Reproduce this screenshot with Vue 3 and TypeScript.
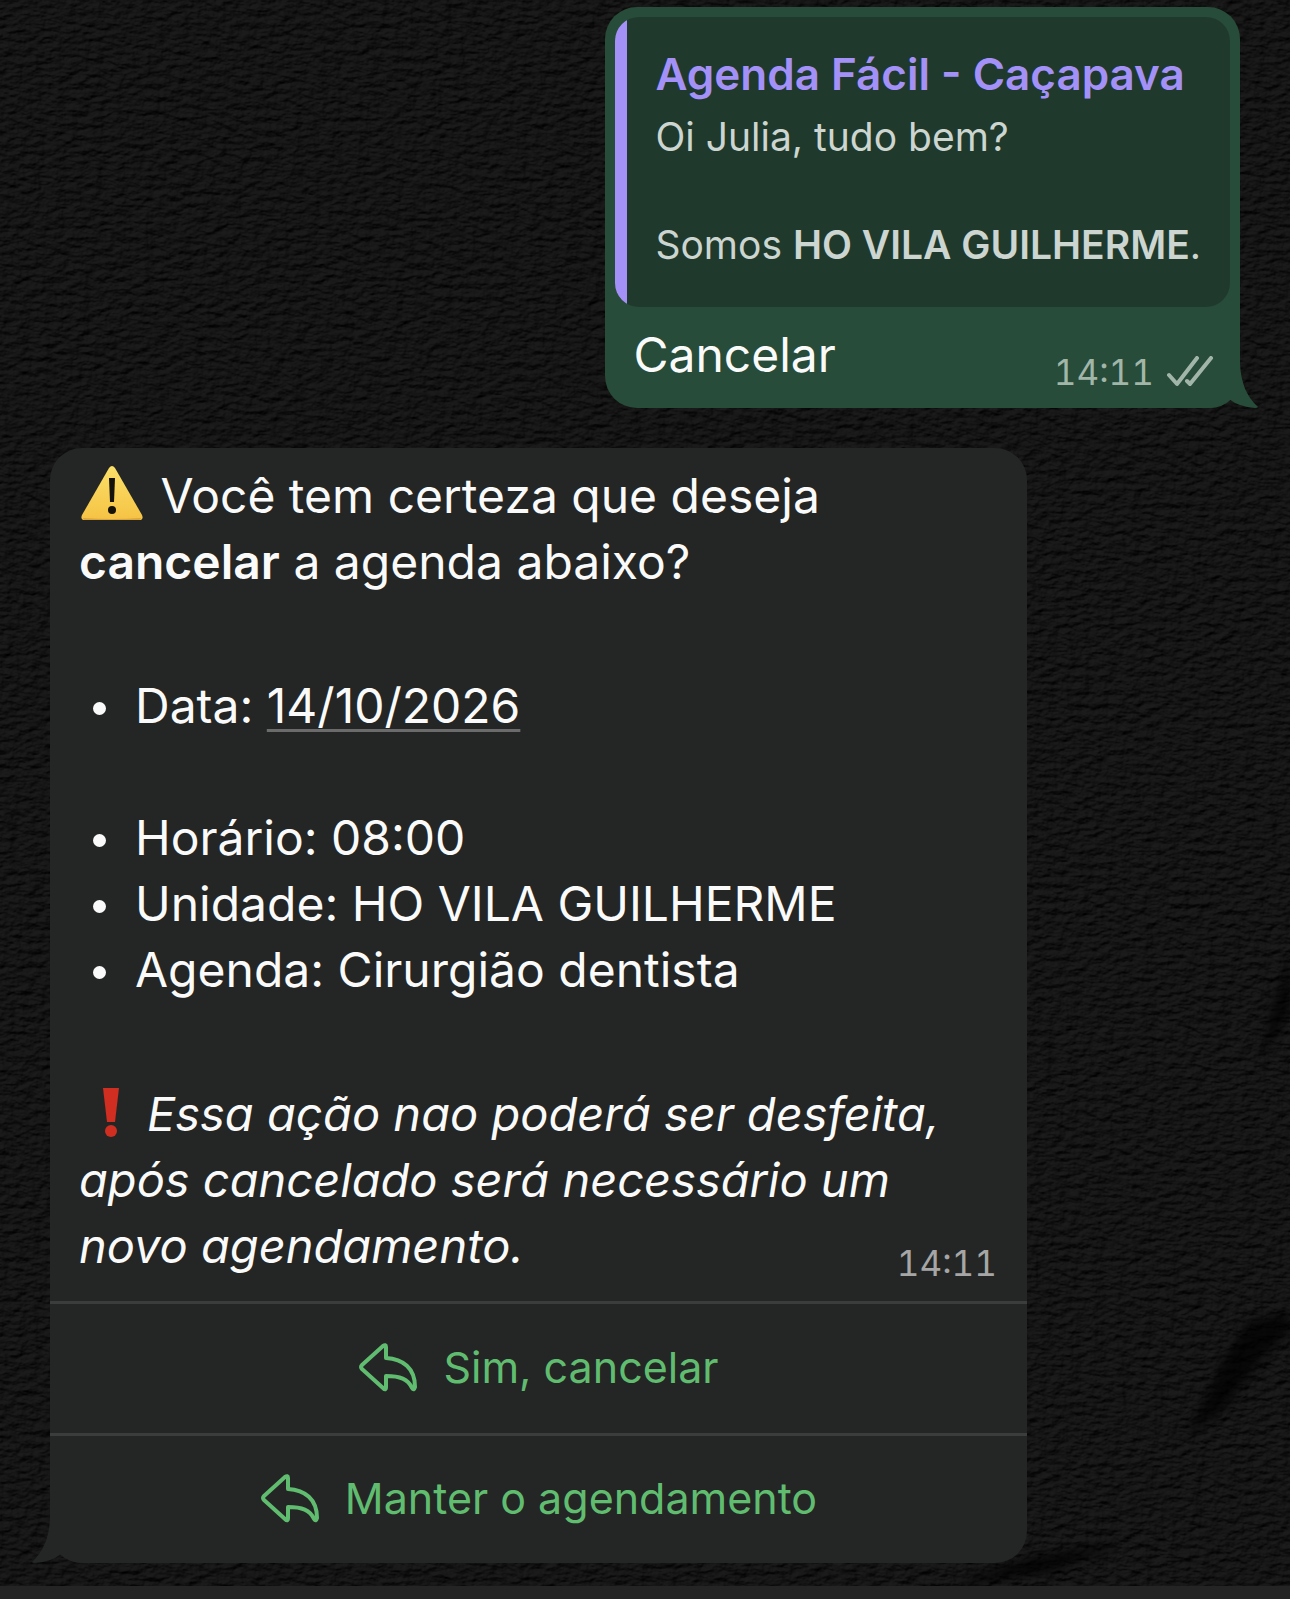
<script setup lang="ts">
interface Detail {
  label: string
  value: string
  isDate?: boolean
}

const details: Detail[] = [
  { label: 'Data', value: '14/10/2026', isDate: true },
  { label: 'Horário', value: '08:00' },
  { label: 'Unidade', value: 'HO VILA GUILHERME' },
  { label: 'Agenda', value: 'Cirurgião dentista' },
]

const replies: string[] = ['Sim, cancelar', 'Manter o agendamento']
</script>

<template>
  <div class="screen">
    <svg class="wallpaper" aria-hidden="true">
      <defs>
        <filter id="rock" x="0" y="0" width="100%" height="100%" color-interpolation-filters="sRGB">
          <feTurbulence type="fractalNoise" baseFrequency="0.08 0.15" numOctaves="5" seed="23" />
          <feDiffuseLighting surfaceScale="3" diffuseConstant="1" lighting-color="#1c1c1c">
            <feDistantLight azimuth="240" elevation="48" />
          </feDiffuseLighting>
        </filter>
        <filter id="soft" x="-20%" y="-20%" width="140%" height="140%">
          <feGaussianBlur stdDeviation="5" />
        </filter>
      </defs>
      <rect width="100%" height="100%" filter="url(#rock)" />
      <g class="cracks" filter="url(#soft)">
        <path d="M1290 1312 L1248 1322 L1222 1362 L1200 1410 L1186 1436 L1222 1412 L1262 1358 L1290 1330Z" />
        <path d="M1290 955 L1272 1010 L1262 1060 L1290 1010Z" />
        <path d="M950 1586 L1030 1558 L1125 1542 L1050 1572Z" />
      </g>
    </svg>

    <main class="chat">
      <article class="bubble outgoing">
        <svg class="tail tail-right" viewBox="0 0 52 44" aria-hidden="true">
          <path d="M34 0 C35 18 40 32 52 43 Q51 44 49 44 Q33 43 23 35 Q14 44 0 44 L0 0Z" />
        </svg>
        <blockquote class="quote">
          <cite>Agenda Fácil - Caçapava</cite>
          <p>Oi Julia, tudo bem?</p>
          <p class="spaced">Somos <strong>HO VILA GUILHERME</strong>.</p>
        </blockquote>
        <div class="reply-row">
          <p class="reply-text">Cancelar</p>
          <div class="meta">
            <time>14:11</time>
            <svg class="ticks" viewBox="0 0 48 32" aria-label="Entregue">
              <path d="M3 19 L11 28 L31 2 M21 25 L24 28 L45 2" />
            </svg>
          </div>
        </div>
      </article>

      <article class="bubble incoming">
        <svg class="tail tail-left" viewBox="0 0 52 44" aria-hidden="true">
          <path d="M18 0 C17 18 12 32 0 43 Q1 44 3 44 Q19 43 29 35 Q38 44 52 44 L52 0Z" />
        </svg>
        <div class="body">
          <p>
            <svg class="emoji" viewBox="0 0 64 56" role="img" aria-label="Aviso">
              <defs>
                <linearGradient id="amber" x1="0" y1="0" x2="0" y2="1">
                  <stop offset="0" stop-color="#fbe069" />
                  <stop offset="1" stop-color="#f5c344" />
                </linearGradient>
              </defs>
              <path d="M29 3 Q32 -1 35 3 L62 50 Q64 55 59 55 L5 55 Q0 55 2 50Z" fill="url(#amber)" />
              <path d="M3 53 Q32 55 61 53 Q61 55 59 55 L5 55 Q3 55 3 53Z" fill="#d9a43a" />
              <path d="M29 13 H35 L34 37 H30Z" fill="#15120a" />
              <circle cx="32" cy="45" r="4" fill="#15120a" />
            </svg>
            Você tem certeza que deseja <strong>cancelar</strong> a agenda abaixo?
          </p>
          <ul>
            <li v-for="item in details" :key="item.label" :class="{ dated: item.isDate }">
              {{ item.label }}: <a v-if="item.isDate" href="#">{{ item.value }}</a><template v-else>{{ item.value }}</template>
            </li>
          </ul>
          <p class="warning">
            <svg class="mark" viewBox="0 0 52 50" role="img" aria-label="Atenção">
              <path d="M19 0 H35 L31 34 H23Z" fill="#d02e20" />
              <circle cx="27" cy="43" r="6" fill="#d02e20" />
            </svg>
            <em>Essa ação nao poderá ser desfeita, após cancelado será necessário um novo agendamento.</em>
          </p>
          <time>14:11</time>
        </div>
        <button v-for="reply in replies" :key="reply" type="button">
          <svg class="arrow" viewBox="0 0 60 52" aria-hidden="true">
            <path d="M4 24 L25 5 Q28 3 28 6 V17 C45 18 57 27 57 46 Q56 50 54 47 C50 38 42 35 28 35 V46 Q28 50 25 47 L4 28 Q2 26 4 24Z" />
          </svg>
          {{ reply }}
        </button>
      </article>
    </main>
    <footer class="composer-edge"></footer>
  </div>
</template>

<style>
body {
  margin: 0;
  background: #111111;
}
</style>

<style scoped>
.screen {
  position: relative;
  display: flex;
  flex-direction: column;
  min-height: 100vh;
  overflow: hidden;
  font-family: Inter, Roboto, "Liberation Sans", sans-serif;
  color: #fafafa;
}

.wallpaper {
  position: absolute;
  inset: 0;
  width: 100%;
  height: 100%;
}

.cracks {
  fill: #060606;
  opacity: 0.7;
}

.chat {
  position: relative;
  flex: 1;
  display: flex;
  flex-direction: column;
  gap: 40px;
  padding: 7px 50px 22px;
}

p,
ul,
blockquote {
  margin: 0;
}

.bubble {
  position: relative;
  border-radius: 32px;
}

.outgoing {
  align-self: flex-end;
  box-sizing: border-box;
  padding: 10px;
  background: #274c39;
  border-bottom-right-radius: 30px;
}

.quote {
  display: flex;
  flex-direction: column;
  padding: 27px 29px 35px 40px;
  border-radius: 24px;
  background: linear-gradient(90deg, #a491f8 12px, #1f3a2d 12px);
  font-size: 39px;
  line-height: 54px;
  color: #ccd5cf;
}

.quote cite {
  margin-bottom: 6px;
  font-size: 44px;
  line-height: 60px;
  font-style: normal;
  font-weight: 600;
  color: #a491f8;
}

.spaced {
  margin-top: 54px;
}

strong {
  font-weight: 600;
}

.reply-row {
  position: relative;
  display: flex;
  justify-content: space-between;
  align-items: flex-end;
  padding: 15px 16px 4px 18px;
}

.reply-text {
  margin-bottom: 6px;
  font-size: 48px;
  line-height: 66px;
}

.meta {
  display: flex;
  align-items: center;
  gap: 12px;
  color: #a2b5a9;
}

time {
  font-size: 35px;
  line-height: 44px;
  font-variant-numeric: tabular-nums;
}

.ticks {
  width: 48px;
  height: 32px;
}

.ticks path {
  fill: none;
  stroke: #a2b5a9;
  stroke-width: 4;
  stroke-linecap: round;
  stroke-linejoin: round;
}

.tail {
  position: absolute;
  bottom: 0;
  width: 52px;
  height: 44px;
}

.tail-right {
  right: -18px;
  fill: #274c39;
}

.tail-left {
  left: -18px;
  fill: #242625;
}

.incoming {
  margin-right: 213px;
  background: #242625;
}

.body {
  position: relative;
  padding: 15px 29px 22px;
  font-size: 48px;
  line-height: 66px;
}

.body time {
  position: absolute;
  right: 30px;
  bottom: 16px;
  line-height: 44px;
  color: #a6a6a6;
}

.emoji {
  width: 64px;
  height: 56px;
  margin: 0 3px 0 1px;
  vertical-align: -8px;
}

.mark {
  width: 52px;
  height: 50px;
  margin: 0 11px 0 5px;
  vertical-align: -7px;
}

em {
  font-size: 47px;
}

ul {
  margin: 78px 0;
  padding: 0;
  list-style: none;
}

li {
  display: flex;
  align-items: center;
  white-space: pre-wrap;
}

li::before {
  content: "";
  width: 13px;
  height: 13px;
  margin: 4px 29px 0 14px;
  border-radius: 50%;
  background: #fafafa;
}

.dated {
  margin-bottom: 66px;
}

a {
  color: inherit;
  text-decoration: underline #6b6b6b 3px;
  text-underline-offset: 6px;
}

button {
  position: relative;
  display: flex;
  align-items: center;
  justify-content: center;
  gap: 25px;
  box-sizing: border-box;
  width: 100%;
  height: 132px;
  margin: 0;
  padding: 0 0 3px;
  border: 0;
  border-top: 3px solid #3b3d3c;
  background: none;
  font: inherit;
  font-size: 43px;
  color: #60bd70;
}

button:last-of-type {
  height: 130px;
}

.arrow {
  width: 60px;
  height: 52px;
}

.arrow path {
  fill: none;
  stroke: #60bd70;
  stroke-width: 4;
  stroke-linejoin: round;
}

.composer-edge {
  position: relative;
  height: 13px;
  background: #242424;
}
</style>
